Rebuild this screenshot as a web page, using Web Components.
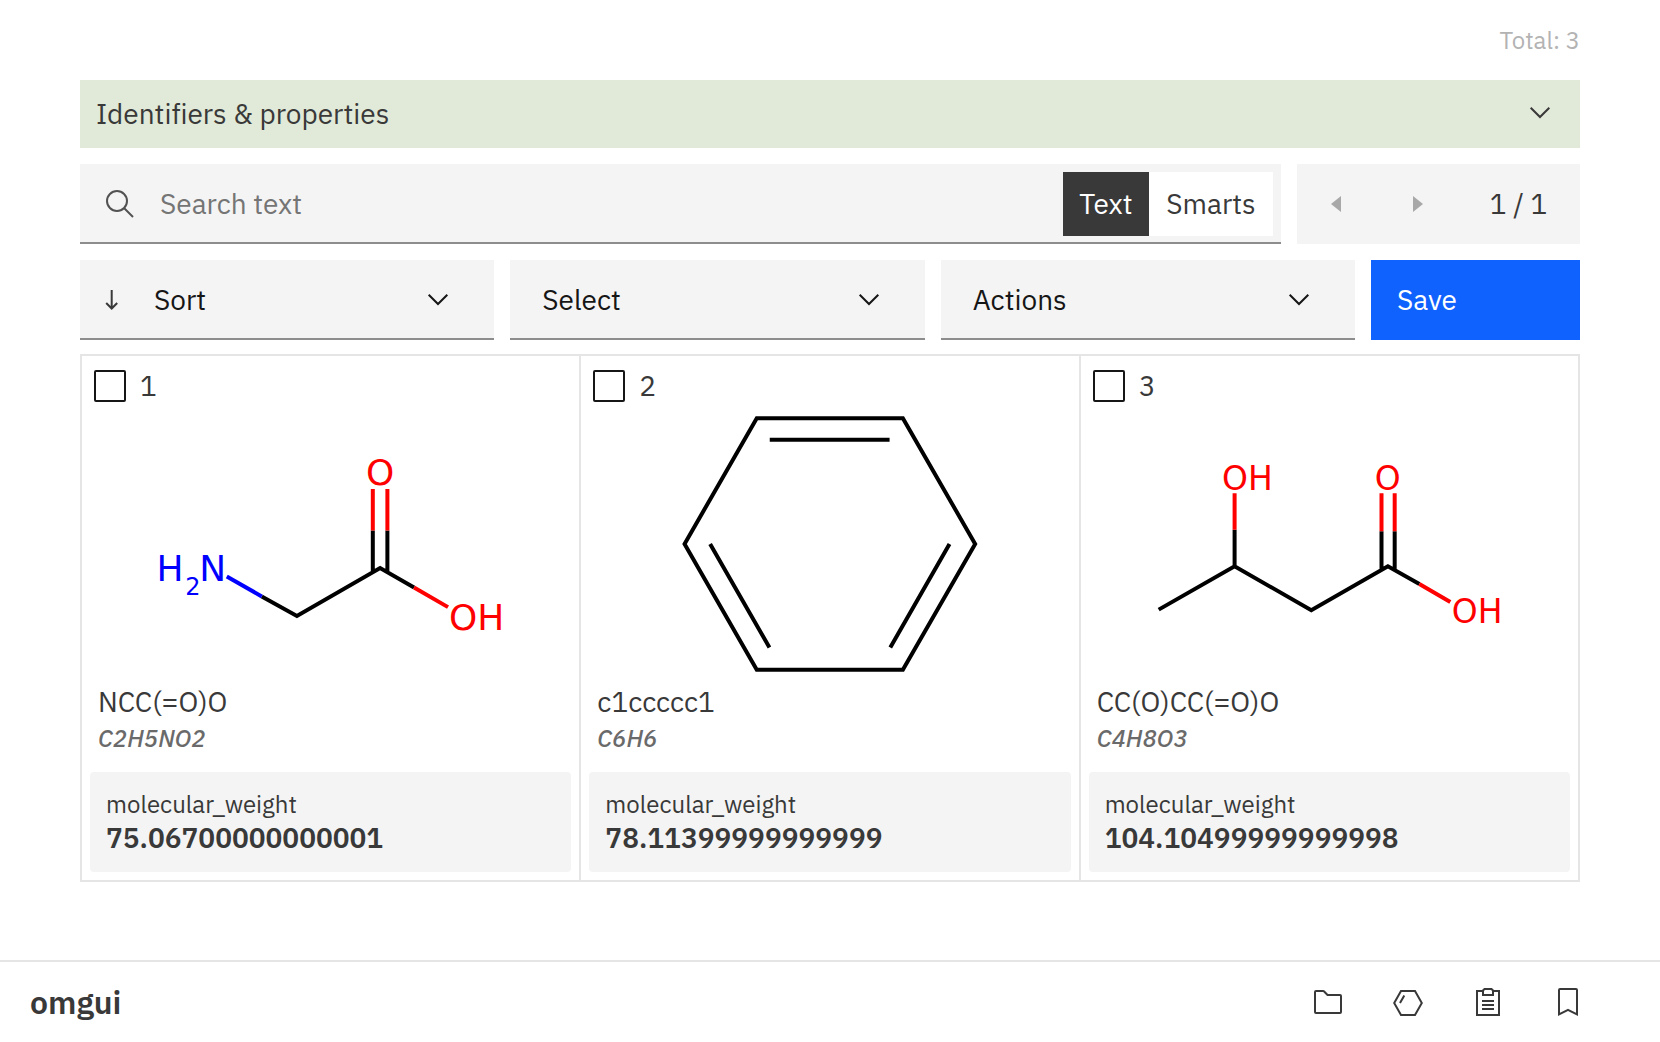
<!DOCTYPE html>
<html lang="en">
<head>
<meta charset="utf-8">
<title>omgui</title>
<style>
  html, body { margin: 0; background: #fff; }
  body {
    --sans: "IBM Plex Sans", "Noto Sans", sans-serif;
    --ink: #393939;
    --ink-strong: #161616;
    --layer: #f4f4f4;
    --line: #e5e5e5;
    --edge: #8d8d8d;
    --body-size: 28px;
    --small-size: 24px;
    font-family: var(--sans);
    font-size: var(--body-size);
    font-variant-ligatures: none;
    color: var(--ink);
  }
</style>
</head>
<body>
<mol-app></mol-app>

<script>
const define = (name, html, setup) => {
  const template = document.createElement('template');
  template.innerHTML = '<style>*,*::before{box-sizing:border-box}button,input,select{font:inherit;color:inherit;border:0;border-radius:0;margin:0;padding:0;background:none}svg{display:block;flex:none}</style>' + html;
  customElements.define(name, class extends HTMLElement {
    constructor() {
      super();
      this.attachShadow({ mode: 'open' }).append(template.content.cloneNode(true));
    }
    connectedCallback() { if (setup) setup(this, this.shadowRoot); }
  });
};

define('mol-chevron', `
  <style>:host{display:block;width:32px;height:32px;pointer-events:none}</style>
  <svg width="32" height="32" viewBox="0 0 32 32" fill="none" stroke="currentColor" stroke-width="2" aria-hidden="true"><path d="M6.7 10.7 16 20l9.3-9.3"/></svg>`);

define('mol-accordion', `
  <style>
    :host{display:block}
    button{display:flex;align-items:center;justify-content:space-between;width:100%;height:68px;padding:0 24px 2px 16px;background:#e1e9d8;text-align:left;font-variant-ligatures:none}
  </style>
  <button type="button" aria-expanded="false"><span><slot></slot></span><mol-chevron></mol-chevron></button>`);

define('mol-search', `
  <style>
    :host{display:flex;align-items:center;height:80px;padding-right:8px;background:var(--layer);box-shadow:inset 0 -2px var(--edge)}
    label{padding:0 24px}
    label svg{color:#525252}
    input{flex:1;min-width:0;height:64px;padding-bottom:2px;outline:0}
    input::placeholder{color:#757575;opacity:1}
    .modes{display:grid;grid-template-columns:86px 124px}
    button{height:64px;padding-bottom:2px;background:#fff}
    button[aria-pressed=true]{background:#393939;color:#fff}
  </style>
  <label for="q" aria-label="Search"><svg width="32" height="32" viewBox="0 0 32 32" fill="none" stroke="currentColor" stroke-width="2"><circle cx="13" cy="13" r="10"/><path d="M20 20l9 9"/></svg></label>
  <input id="q" type="text" placeholder="Search text">
  <div class="modes"><button type="button" aria-pressed="true">Text</button><button type="button" aria-pressed="false">Smarts</button></div>`,
  (host, root) => root.querySelectorAll('button').forEach(b => b.onclick = () =>
    root.querySelectorAll('button').forEach(o => o.setAttribute('aria-pressed', o === b))));

define('mol-pager', `
  <style>
    :host{display:flex;align-items:center;height:80px;background:var(--layer)}
    button{display:grid;place-items:center;width:80px;height:80px;color:#a8a8a8}
    span{flex:1;text-align:center;padding-bottom:2px}
  </style>
  <button type="button" disabled aria-label="Previous page"><svg width="14" height="16" viewBox="0 0 14 16"><path fill="currentColor" d="M11 0v16L1 8z"/></svg></button>
  <button type="button" disabled aria-label="Next page"><svg width="14" height="16" viewBox="0 0 14 16"><path fill="currentColor" d="M3 0v16l10-8z"/></svg></button>
  <span><slot></slot></span>`);

define('mol-dropdown', `
  <style>
    :host{display:grid;grid-template-columns:minmax(0,1fr);align-items:center;height:80px;background:var(--layer);box-shadow:inset 0 -2px var(--edge)}
    select,.lead,mol-chevron{grid-area:1/1}
    select{appearance:none;width:100%;height:80px;padding:0 80px 2px 32px;color:var(--ink-strong);outline:0}
    .lead{display:none;margin-left:24px;pointer-events:none}
    :host([sorted]) .lead{display:block}
    :host([sorted]) select{padding-left:74px}
    mol-chevron{justify-self:end;margin-right:40px;color:var(--ink-strong)}
  </style>
  <select></select>
  <svg class="lead" width="16" height="24" viewBox="0 0 16 24" fill="none" stroke="currentColor" stroke-width="2"><path d="M7.700 2v18.500M2.200 15l5.500 5.500 5.500-5.500"/></svg>
  <mol-chevron></mol-chevron>`,
  (host, root) => {
    const select = root.querySelector('select');
    select.setAttribute('aria-label', host.getAttribute('label'));
    select.replaceChildren(new Option(host.getAttribute('label')));
  });

define('mol-save', `
  <style>
    :host{display:block}
    button{width:100%;height:80px;padding:0 26px 2px;background:#0f62fe;color:#fff;text-align:left}
  </style>
  <button type="button"><slot></slot></button>`);

define('mol-card', `
  <style>
    :host{display:flex;flex-direction:column;background:#fff;padding:14px 8px 8px}
    .pick{display:flex;align-items:center;gap:14px;height:32px;padding-left:4px}
    .pick span{padding-bottom:2px}
    .pick input{appearance:none;width:32px;height:32px;border:2px solid var(--ink-strong);border-radius:2px}
    .pick input:checked{background:var(--ink-strong)}
    .art{display:block;height:280px;margin:2px -8px 0}
    .ids{padding:0 8px;margin-bottom:16px}
    .smiles{line-height:36px}
    .formula{font-size:var(--small-size);font-style:italic;font-weight:500;line-height:36px;color:#6a6a6a}
    .prop{margin:0;padding:16px;background:var(--layer);border-radius:4px}
    dt{font-size:var(--small-size);line-height:32px}
    dd{margin:0;font-weight:600;line-height:36px}
  </style>
  <label class="pick"><input type="checkbox"><span><slot name="index"></slot></span></label>
  <div class="art"><slot name="art"></slot></div>
  <div class="ids"><div class="smiles"><slot name="smiles"></slot></div><div class="formula"><slot name="formula"></slot></div></div>
  <dl class="prop"><dt><slot name="key"></slot></dt><dd><slot name="value"></slot></dd></dl>`);

define('mol-grid', `
  <style>
    :host{display:grid;grid-template-columns:repeat(3,minmax(0,1fr));gap:2px;padding:2px;background:var(--line)}
    svg{width:100%;height:280px}
    .bond{fill:none;stroke:#000;stroke-width:4}
    .o{stroke:#f00}
    .n{stroke:#00f}
    text{font-family:"DejaVu Sans",sans-serif}
    .to{fill:#f00}
    .tn{fill:#00f}
  </style>
  <mol-card>
    <span slot="index">1</span>
    <svg slot="art" viewBox="-.5 0 498 280" role="img" aria-label="Glycine">
      <path class="bond" d="M179.500 192.500 214.700 212 298 164 332 183.500M290.700 168V126.500M305.300 168V126.500"/>
      <path class="bond n" d="M144.500 172.500l35 20"/>
      <path class="bond o" d="M332 183.500l34 19.700M290.700 126.500V85M305.300 126.500V85"/>
      <g font-size="36"><text class="tn" x="74" y="177">H</text><text class="tn" x="103" y="191" font-size="24">2</text><text class="tn" x="117" y="177">N</text><text class="to" x="298" y="81" text-anchor="middle">O</text><text class="to" x="367" y="226">OH</text></g>
    </svg>
    <span slot="smiles">NCC(=O)O</span><span slot="formula">C2H5NO2</span>
    <span slot="key">molecular_weight</span><span slot="value">75.06700000000001</span>
  </mol-card>
  <mol-card>
    <span slot="index">2</span>
    <svg slot="art" viewBox="0 0 498 280" role="img" aria-label="Benzene">
      <path class="bond" d="M176 14H322.300L394.700 140 322.300 266H176L103.700 140ZM189 35.700H309M129.300 140 188.700 243.700M369 140 309.700 243.700"/>
    </svg>
    <span slot="smiles">c1ccccc1</span><span slot="formula">C6H6</span>
    <span slot="key">molecular_weight</span><span slot="value">78.11399999999999</span>
  </mol-card>
  <mol-card>
    <span slot="index">3</span>
    <svg slot="art" viewBox=".8 0 498 280" role="img" aria-label="3-Hydroxybutyric acid">
      <path class="bond" d="M78.600 205.700 154.600 162.300 231.400 206.300 308.100 162.300 339.600 180M154.600 162.300V125.700M301.700 166V127.300M314.900 166V127.300"/>
      <path class="bond o" d="M154.600 125.700V89.300M301.700 127.300V89.300M314.900 127.300V89.300M339.600 180l31 18"/>
      <g font-size="33"><text class="to" x="142" y="86">OH</text><text class="to" x="308" y="86" text-anchor="middle">O</text><text class="to" x="372" y="219">OH</text></g>
    </svg>
    <span slot="smiles">CC(O)CC(=O)O</span><span slot="formula">C4H8O3</span>
    <span slot="key">molecular_weight</span><span slot="value">104.10499999999998</span>
  </mol-card>`);

define('mol-footer', `
  <style>
    :host{display:flex;align-items:center;justify-content:space-between;height:82px;padding:0 76px 0 30px;border-top:2px solid var(--line)}
    .brand{color:inherit;text-decoration:none;font-size:32px;font-weight:600}
    nav{display:flex;gap:48px}
    nav a{color:inherit}
  </style>
  <a class="brand" href="#">omgui</a>
  <nav>
    <a href="#files" aria-label="Files"><svg width="32" height="32" viewBox="0 0 32 32" fill="currentColor"><path d="m11.170 6 3.420 3.410.58.590H28v16H4V6h7.170m0-2H4a2 2 0 0 0-2 2v20a2 2 0 0 0 2 2h24a2 2 0 0 0 2-2V10a2 2 0 0 0-2-2H16l-3.410-3.410A2 2 0 0 0 11.170 4Z"/></svg></a>
    <a href="#molecules" aria-label="Molecules"><svg width="32" height="32" viewBox="0 0 32 32" fill="none" stroke="currentColor" stroke-width="2"><path d="M9 5h14l6.800 12L23 29H9L2.200 17ZM8 17l4.300-7.500"/></svg></a>
    <a href="#worksets" aria-label="My molecules"><svg width="32" height="32" viewBox="0 0 32 32" fill="none" stroke="currentColor" stroke-width="2"><path d="M11 5H5v24h22V5h-6M11 9V4.500L12.500 3h7L21 4.500V9ZM10 15h12M10 19h12M10 23h12"/></svg></a>
    <a href="#results" aria-label="Results"><svg width="32" height="32" viewBox="0 0 32 32" fill="currentColor"><path d="M24 4v22.750l-7.100-3.590-.9-.450-.9.450L8 26.750V4h16m0-2H8a2 2 0 0 0-2 2v26l10-5.050L26 30V4a2 2 0 0 0-2-2Z"/></svg></a>
  </nav>`);

define('mol-app', `
  <style>
    :host{display:flex;flex-direction:column;min-height:100vh}
    main{flex:1;display:flex;flex-direction:column;gap:16px;padding:0 80px 78px}
    .total{display:flex;align-items:center;justify-content:flex-end;height:64px;padding-top:16px;font-size:var(--small-size);color:#b3b3b3}
    .row{display:grid;gap:16px}
    .find{grid-template-columns:minmax(0,1fr) 283px}
    .tools{grid-template-columns:repeat(3,minmax(0,1fr)) 209px}
    mol-grid{margin-top:-2px}
  </style>
  <main>
    <div class="total">Total: 3</div>
    <mol-accordion>Identifiers &amp; properties</mol-accordion>
    <div class="row find"><mol-search></mol-search><mol-pager>1 / 1</mol-pager></div>
    <div class="row tools">
      <mol-dropdown label="Sort" sorted></mol-dropdown>
      <mol-dropdown label="Select"></mol-dropdown>
      <mol-dropdown label="Actions"></mol-dropdown>
      <mol-save>Save</mol-save>
    </div>
    <mol-grid></mol-grid>
  </main>
  <mol-footer></mol-footer>`);
</script>
</body>
</html>
